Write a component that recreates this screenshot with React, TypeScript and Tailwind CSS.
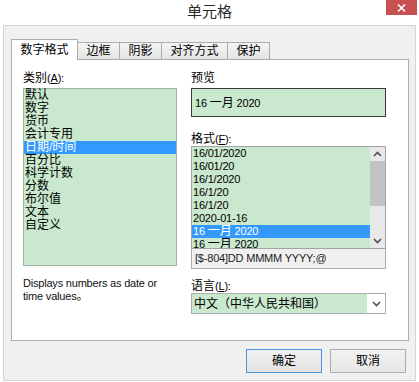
import React from "react";

const L = ({ children }: { children: React.ReactNode }) => (
  <span className="text-[11px] tracking-[-0.2px]">{children}</span>
);

const Up = () => (
  <svg width="9" height="6" viewBox="0 0 9 6">
    <path d="M1 5 L4.5 1.5 L8 5" fill="none" stroke="#505050" strokeWidth="1.6" />
  </svg>
);
const Down = () => (
  <svg width="9" height="6" viewBox="0 0 9 6">
    <path d="M1 1 L4.5 4.5 L8 1" fill="none" stroke="#505050" strokeWidth="1.6" />
  </svg>
);

const categories = [
  "默认",
  "数字",
  "货币",
  "会计专用",
  "日期/时间",
  "百分比",
  "科学计数",
  "分数",
  "布尔值",
  "文本",
  "自定义",
];

const DateCn = () => (
  <span className="whitespace-pre">
    <L>16 </L>一月<L> 2020</L>
  </span>
);

const formats: React.ReactNode[] = [
  <L>16/01/2020</L>,
  <L>16/01/20</L>,
  <L>16/1/2020</L>,
  <L>16/1/20</L>,
  <L>16/1/20</L>,
  <L>2020-01-16</L>,
  <DateCn />,
  <DateCn />,
];

export default function App() {
  return (
    <div className="w-[419px] h-[382px] bg-white relative overflow-hidden font-['Liberation_Sans','Noto_Sans_CJK_SC',sans-serif] text-[12px] text-black">
      <div className="h-[25px] flex items-center justify-center text-[15px] text-[#2b2b2b]">
        单元格
      </div>
      <div className="absolute top-0 right-[2px] w-[31px] h-[15px] bg-[#c75050] flex items-center justify-center">
        <svg width="9" height="8" viewBox="0 0 9 8">
          <path d="M1 0.5 L8 7.5 M8 0.5 L1 7.5" stroke="white" strokeWidth="1.6" />
        </svg>
      </div>

      <div className="mx-[3px] h-[356px] border border-[#d4d4d4] bg-[#f0f0f0] pl-[7px] pt-[13px]">
        {/* tabs */}
        <div className="flex items-end">
          <div className="relative z-10 -mb-px w-[67px] h-[21px] bg-white border border-b-0 border-[#acacac] flex items-center justify-center pb-[1px]">
            数字格式
          </div>
          {[
            ["边框", "w-[42px]"],
            ["阴影", "w-[42px]"],
            ["对齐方式", "w-[66px]"],
            ["保护", "w-[42px]"],
          ].map(([t, w]) => (
            <div
              key={t}
              className={`${w} h-[17px] border-t border-r border-[#acacac] bg-linear-to-b from-[#f4f4f4] to-[#e4e4e4] flex items-center justify-center`}
            >
              {t}
            </div>
          ))}
        </div>

        {/* panel */}
        <div className="w-[398px] h-[282px] border border-[#acacac] bg-white flex pl-[11px] pt-[11px]">
          {/* left column */}
          <div className="w-[154px] flex flex-col">
            <div className="h-[14px] leading-[14px]">
              类别<L>(<span className="underline">A</span>):</L>
            </div>
            <div className="mt-[3px] h-[178px] border border-[#9fb5a3] bg-[#c9e8cd] flex flex-col">
              {categories.map((c) => (
                <div
                  key={c}
                  className={`h-[13px] leading-[13px] pl-[1px] ${
                    c === "日期/时间" ? "bg-[#3399ff] text-white" : ""
                  }`}
                >
                  {c}
                </div>
              ))}
            </div>
            <div className="mt-[11px] leading-[13px] text-[11px] tracking-[-0.2px] text-[#111]">
              Displays numbers as date or
              <br />
              time values<span className="text-[12px] tracking-normal">。</span>
            </div>
          </div>

          {/* right column */}
          <div className="ml-[14px] w-[195px] flex flex-col">
            <div className="h-[14px] leading-[14px]">预览</div>
            <div className="mt-[3px] h-[29px] border border-[#3a3a3a] bg-[#c9e8cd] flex items-center pl-[3px]">
              <DateCn />
            </div>
            <div className="mt-[15px] h-[14px] leading-[14px]">
              格式<L>(<span className="underline">F</span>):</L>
            </div>
            <div className="h-[103px] border border-[#a3a3a3] flex">
              <div className="flex-1 bg-[#c9e8cd] overflow-hidden flex flex-col">
                {formats.map((f, i) => (
                  <div
                    key={i}
                    className={`shrink-0 h-[13px] leading-[13px] pl-[1px] ${
                      i === 6 ? "bg-[#3399ff] text-white" : ""
                    }`}
                  >
                    {f}
                  </div>
                ))}
              </div>
              <div className="w-[15px] bg-[#e8e8e8] flex flex-col">
                <div className="h-[14px] flex items-center justify-center">
                  <Up />
                </div>
                <div className="h-[45px] bg-[#c3c3c3]" />
                <div className="flex-1" />
                <div className="h-[14px] flex items-center justify-center">
                  <Down />
                </div>
              </div>
            </div>
            <div className="h-[20px] border border-t-0 border-[#abadb3] bg-[#f0f0f0] flex items-center pl-[3px] text-[#222]">
              <L>[$-804]DD MMMM YYYY;@</L>
            </div>
            <div className="mt-[10px] h-[14px] leading-[14px]">
              语言<L>(<span className="underline">L</span>):</L>
            </div>
            <div className="h-[21px] border border-[#abadb3] flex">
              <div className="flex-1 bg-[#c9e8cd] flex items-center pl-[2px]">
                中文（中华人民共和国）
              </div>
              <div className="w-[18px] bg-white flex items-center justify-center">
                <Down />
              </div>
            </div>
          </div>
        </div>

        {/* buttons */}
        <div className="mt-[8px] flex justify-end gap-[8px] pr-[9px]">
          <div className="w-[76px] h-[24px] border border-[#4a94de] bg-linear-to-b from-[#f0f0f0] to-[#e4e4e4] flex items-center justify-center">
            确定
          </div>
          <div className="w-[76px] h-[24px] border border-[#acacac] bg-linear-to-b from-[#f2f2f2] to-[#e6e6e6] flex items-center justify-center">
            取消
          </div>
        </div>
      </div>
    </div>
  );
}
